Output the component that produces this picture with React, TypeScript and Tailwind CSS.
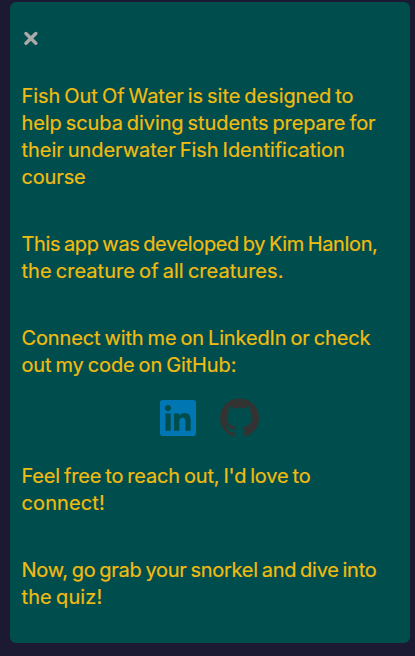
import { SiGithub, SiLinkedin } from "react-icons/si";

type Line = { text: string; tracking: string };

function Paragraph({ lines }: { lines: Line[] }) {
  return (
    <p>
      {lines.map((line) => (
        <span key={line.text} className={`block whitespace-nowrap ${line.tracking}`}>
          {line.text}
        </span>
      ))}
    </p>
  );
}

export default function App() {
  return (
    <main className="h-screen bg-[#1b1a32] pt-[2px] pl-[10px] pr-[5px] font-['Inter',sans-serif]">
      <section className="flex h-[641px] flex-col rounded-md bg-[#004d4d] pr-3 pl-[11.5px] text-[20px] leading-[27px] font-normal text-[#f0bc11] [-webkit-text-stroke:0.2px_#f0bc11] [word-spacing:-1.5px]">
        <button aria-label="Close" className="mt-[29px] ml-[2.5px] h-[14px] w-[14px] text-[#aaaaaa]">
          <svg viewBox="0 0 14 14" className="h-full w-full" stroke="currentColor" strokeWidth="3.4" strokeLinecap="round">
            <path d="M2 2.5 11.8 12.3M11.8 2.5 2 12.3" />
          </svg>
        </button>
        <div className="mt-[38px] flex flex-col gap-10">
          <Paragraph
            lines={[
              { text: "Fish Out Of Water is site designed to", tracking: "tracking-[-0.06px]" },
              { text: "help scuba diving students prepare for", tracking: "tracking-[-0.09px]" },
              { text: "their underwater Fish Identification", tracking: "tracking-[-0.05px]" },
              { text: "course", tracking: "tracking-[-0.15px]" },
            ]}
          />
          <Paragraph
            lines={[
              { text: "This app was developed by Kim Hanlon,", tracking: "tracking-[-0.36px]" },
              { text: "the creature of all creatures.", tracking: "tracking-[0.03px]" },
            ]}
          />
          <Paragraph
            lines={[
              { text: "Connect with me on LinkedIn or check", tracking: "tracking-[-0.13px]" },
              { text: "out my code on GitHub:", tracking: "tracking-[-0.12px]" },
            ]}
          />
        </div>
        <div className="mt-[18px] mr-[0.5px] flex h-10 justify-center gap-[24px]">
          <a aria-label="LinkedIn" className="pt-[3px]">
            <SiLinkedin className="h-9 w-9 text-[#0076b2]" />
          </a>
          <a aria-label="GitHub" className="pt-[1px]">
            <SiGithub className="h-[39px] w-[39px] text-[#333333]" />
          </a>
        </div>
        <div className="mt-[26px] flex flex-col gap-10">
          <Paragraph
            lines={[
              { text: "Feel free to reach out, I'd love to", tracking: "tracking-[-0.16px]" },
              { text: "connect!", tracking: "tracking-[0.12px]" },
            ]}
          />
          <Paragraph
            lines={[
              { text: "Now, go grab your snorkel and dive into", tracking: "tracking-[-0.26px]" },
              { text: "the quiz!", tracking: "tracking-[0.1px]" },
            ]}
          />
        </div>
      </section>
    </main>
  );
}
